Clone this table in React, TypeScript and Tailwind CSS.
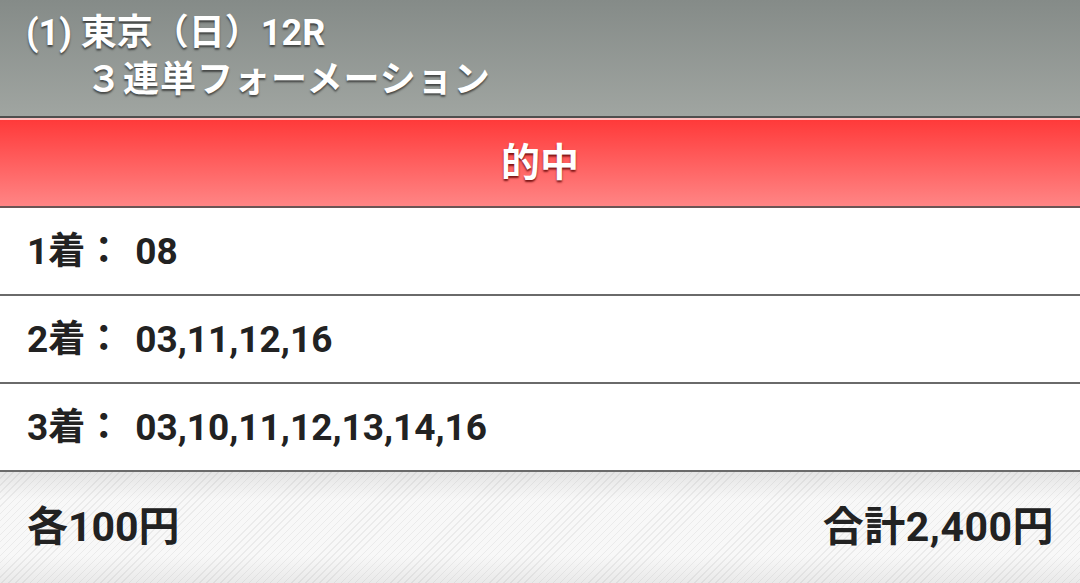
import React from "react";

const font = "font-['Roboto','Noto_Sans_CJK_JP',sans-serif]";

function Row({ label, value }: { label: string; value: string }) {
  return (
    <div className="h-[88px] bg-white border-b-2 border-[#6a6a6a] flex items-center pl-[27px] text-[37px] font-bold text-[#222] leading-none">
      <span>{label}</span>
      <span className="ml-[13px]">{value}</span>
    </div>
  );
}

export default function App() {
  return (
    <div className={`w-[1080px] h-[583px] overflow-hidden ${font}`}>
      <div className="h-[118px] border-b-2 border-[#4e4e4e] bg-[linear-gradient(to_bottom,#858b88,#a0a5a1)] text-white font-bold text-[36px] leading-none [text-shadow:0_2px_2px_rgba(0,0,0,0.55)] pl-[26px] pt-[15px]">
        <div className="h-[36px] flex items-center">(1) 東京（日）12R</div>
        <div className="h-[36px] flex items-center mt-[11px] pl-[60px] tracking-[1px]">３連単フォーメーション</div>
      </div>
      <div className="h-[90px] border-t-2 border-[#ffc0c0] border-b-2 border-b-[#6a5555] bg-[linear-gradient(to_bottom,#ff3a3a,#ff8585)] flex items-center justify-center text-white font-bold text-[39px] leading-none [text-shadow:0_2px_2px_rgba(90,0,0,0.8)]">
        的中
      </div>
      <Row label="1着：" value="08" />
      <Row label="2着：" value="03,11,12,16" />
      <Row label="3着：" value="03,10,11,12,13,14,16" />
      <div className="h-[111px] flex items-center justify-between pl-[27px] pr-[26px] text-[41px] font-bold text-[#222] leading-none bg-[linear-gradient(to_bottom,rgba(0,0,0,0.08),rgba(0,0,0,0)_25%,rgba(0,0,0,0)_75%,rgba(0,0,0,0.06)),repeating-linear-gradient(135deg,#f8f8f8_0px,#f8f8f8_4px,#ebebeb_4px,#ebebeb_5px)]">
        <span>各100円</span>
        <span className="tracking-[0.5px]">合計2,400円</span>
      </div>
    </div>
  );
}
